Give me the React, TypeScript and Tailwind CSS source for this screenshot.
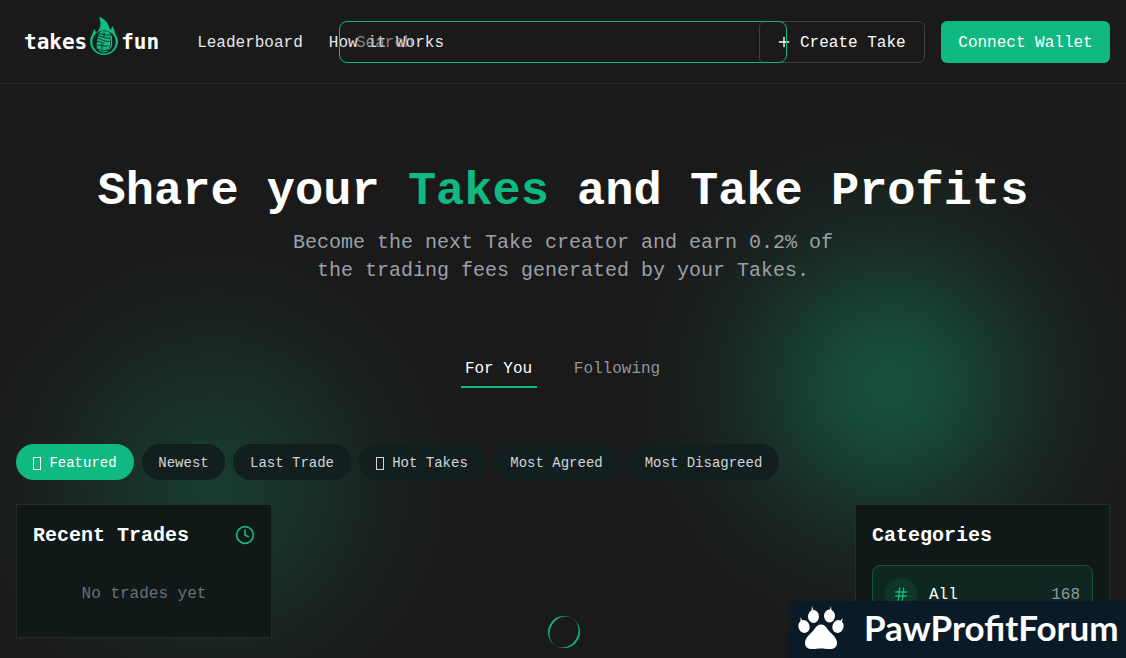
import { Clock, Hash, Plus } from "lucide-react";

type Filter = {
  label: string;
  width: string;
  glyph?: boolean;
};

const filters: Filter[] = [
  { label: "Featured", width: "min-w-[118px]", glyph: true },
  { label: "Newest", width: "min-w-[83px]" },
  { label: "Last Trade", width: "min-w-[118px]" },
  { label: "Hot Takes", width: "min-w-[126px]", glyph: true },
  { label: "Most Agreed", width: "min-w-[127px]" },
  { label: "Most Disagreed", width: "min-w-[151px]" },
];

function FlameMic() {
  return (
    <svg viewBox="0 0 28 38" className="h-[38px] w-7" aria-hidden="true">
      <path
        fill="#10b981"
        d="M9 0c5 1 10 6 11 13 1-1 2-2 2-4 3 3 2 6 4 9 1 2 2 4 2 6 0 8-6 14-14 14S0 32 0 24c0-4 3-7 4-12 1 1 2 2 2 4 4-3 6-9 3-16Z"
      />
      <circle cx="14" cy="25" r="11.6" fill="#14211c" />
      <path fill="#10b981" d="m8.500 16.500 3-2.500 7 .5 2.500 3-1 8.500.5 2-2 4-5 1.500-6.500-2-.5-4Z" />
      <g fill="none" stroke="#14211c" strokeWidth="0.9" strokeLinecap="round">
        <path d="M9 17c3-1 6 2 11 1M8.500 19c4 0 5 3 11 2M8 21.500c3 0 5 3 11 3M7 25c3-2 4 2 7 1M7 28c4-1 6 2 11 1M14 16v4M12 27v5" />
      </g>
      <path fill="none" stroke="#10b981" strokeWidth="1.2" d="M21.500 19v10l-3 4M9 33l4 2 5-1" />
    </svg>
  );
}

function Paw() {
  return (
    <svg viewBox="0 0 46 44" className="h-11 w-[46px]" fill="#fff" aria-hidden="true">
      <ellipse cx="15.500" cy="10.500" rx="5.500" ry="6.500" />
      <ellipse cx="31.500" cy="10" rx="5.500" ry="6.500" />
      <ellipse cx="6" cy="20.500" rx="5.500" ry="6.500" transform="rotate(-20 6 20.500)" />
      <ellipse cx="40" cy="20.500" rx="5.500" ry="6.500" transform="rotate(20 40 20.500)" />
      <path d="m13.500 5 .5-5 1.500 5ZM31.500 5 33 0l.5 5ZM2.500 16V11l2 4ZM42 15l3-3-1.500 5Z" />
      <path d="M23 18.500c3 0 4.500 1.500 6.500 4.500 3 4.500 9.500 8 9.500 14 0 4-3 6-7 6s-6-.5-9-.5-5 .5-9 .5-7-2-7-6c0-6 6.500-9.500 9.500-14 2-3 3.500-4.500 6.500-4.500Z" />
    </svg>
  );
}

function Header() {
  return (
    <header className="relative flex h-[84px] items-center justify-between border-b border-[#282828] bg-[#1a1a1a] px-4">
      <div className="flex items-center gap-[38px] pl-2">
        <a
          href="#"
          aria-label="takes fun"
          className="flex items-center font-['DejaVu_Sans_Mono',monospace] text-[21px] font-bold text-white"
        >
          <span className="pt-0.5">takes</span>
          <span className="mx-[3px] -mt-3">
            <FlameMic />
          </span>
          <span className="pt-0.5">fun</span>
        </a>
        <nav className="flex gap-[26px] pt-0.5 text-gray-200">
          <a href="#leaderboard">Leaderboard</a>
          <a href="#how">How it Works</a>
        </nav>
      </div>

      <div className="flex gap-4">
        <button
          type="button"
          className="flex h-[42px] min-w-[166px] items-center gap-2 rounded-md border border-[#3f3f46] px-4 text-white"
        >
          <Plus size={16} strokeWidth={2} aria-hidden="true" />
          <span className="pt-0.5">Create Take</span>
        </button>
        <button
          type="button"
          className="h-[42px] min-w-[169px] rounded-md bg-[#10b981] px-4 pt-0.5 text-white"
        >
          Connect Wallet
        </button>
      </div>

      <input
        type="search"
        aria-label="Search"
        placeholder="Search"
        className="absolute left-1/2 h-[42px] w-full max-w-md -translate-x-1/2 rounded-lg border border-[#10b981] bg-transparent px-4 pt-0.5 text-white outline-none placeholder:text-gray-400/80"
      />
    </header>
  );
}

function Hero() {
  return (
    <section className="flex flex-col items-center pt-20 text-center">
      <h1 className="text-[47px] leading-[56px] font-bold text-white">
        Share your <span className="text-[#10b981]">Takes</span> and Take Profits
      </h1>
      <p className="mt-[9px] max-w-xl text-xl text-[#9ca0a8]">
        Become the next Take creator and earn 0.2% of the trading fees generated by your Takes.
      </p>
    </section>
  );
}

function Tabs() {
  return (
    <div role="tablist" className="mt-[63px] flex justify-center gap-8">
      <button
        type="button"
        role="tab"
        aria-selected="true"
        className="h-10 min-w-[76px] border-b-2 border-[#10b981] px-1 pt-1 text-white"
      >
        For You
      </button>
      <button
        type="button"
        role="tab"
        aria-selected="false"
        className="h-10 min-w-[97px] border-b-2 border-transparent px-1 pt-1 text-[#92949a]"
      >
        Following
      </button>
    </div>
  );
}

function Filters() {
  return (
    <div className="mt-14 flex flex-wrap gap-2">
      {filters.map(({ label, width, glyph }, index) => (
        <button
          key={label}
          type="button"
          className={`flex h-9 items-center justify-center gap-2 rounded-full pt-0.5 text-sm ${width} ${
            index === 0 ? "bg-[#10b981] text-white" : "bg-[#131f1e] text-gray-300"
          }`}
        >
          {glyph && <span aria-hidden="true" className="h-[13px] w-2 border border-current" />}
          {label}
        </button>
      ))}
    </div>
  );
}

function RecentTrades() {
  return (
    <section className="self-start border border-[#2a2a2a] bg-[#101917] p-4">
      <div className="flex items-center justify-between">
        <h2 className="pt-0.5 text-xl leading-[26px] font-bold text-white">Recent Trades</h2>
        <Clock size={20} className="text-[#10b981]" aria-hidden="true" />
      </div>
      <p className="mt-4 pt-[17px] pb-[15px] text-center text-[#6b7078]">No trades yet</p>
    </section>
  );
}

function Categories() {
  return (
    <section className="self-start border border-[#2a2a2a] bg-[#101917] p-4">
      <h2 className="pt-0.5 text-xl leading-[26px] font-bold text-white">Categories</h2>
      <button
        type="button"
        className="mt-4 flex w-full items-center gap-3 rounded-lg border border-[#10573f] bg-[#0e2720] p-3"
      >
        <span className="flex size-8 items-center justify-center rounded-full bg-[#0e362a]">
          <Hash size={16} className="text-[#10b981]" aria-hidden="true" />
        </span>
        <span className="pt-0.5 text-white">All</span>
        <span className="ml-auto pt-0.5 text-[#92969d]">168</span>
      </button>
    </section>
  );
}

export default function App() {
  return (
    <div className="min-h-screen bg-[#1a1a1a] bg-[radial-gradient(circle_at_79%_385px,rgba(16,185,129,0.34)_0px,rgba(16,185,129,0.30)_45px,rgba(16,185,129,0.19)_105px,rgba(16,185,129,0.08)_165px,rgba(16,185,129,0.025)_220px,transparent_275px),radial-gradient(circle_at_19%_485px,rgba(16,185,129,0.21)_0px,rgba(16,185,129,0.18)_45px,rgba(16,185,129,0.12)_105px,rgba(16,185,129,0.05)_165px,rgba(16,185,129,0.015)_220px,transparent_275px)] font-['Liberation_Mono',monospace] text-base">
      <Header />
      <main className="px-4">
        <Hero />
        <Tabs />
        <Filters />
        <div className="mt-6 grid grid-cols-[256px_1fr_255px]">
          <RecentTrades />
          <div className="flex justify-center pt-28">
            <div
              role="status"
              aria-label="Loading"
              className="size-8 -rotate-60 rounded-full border-y-2 border-[#10b981]"
            />
          </div>
          <Categories />
        </div>
      </main>
      <aside className="fixed right-0 bottom-0 flex h-[57px] w-[337px] items-center gap-5 bg-[#0a1a27] pb-1 pl-[9px] font-['Lato',sans-serif] text-[35px] font-bold text-white">
        <Paw />
        PawProfitForum
      </aside>
    </div>
  );
}
